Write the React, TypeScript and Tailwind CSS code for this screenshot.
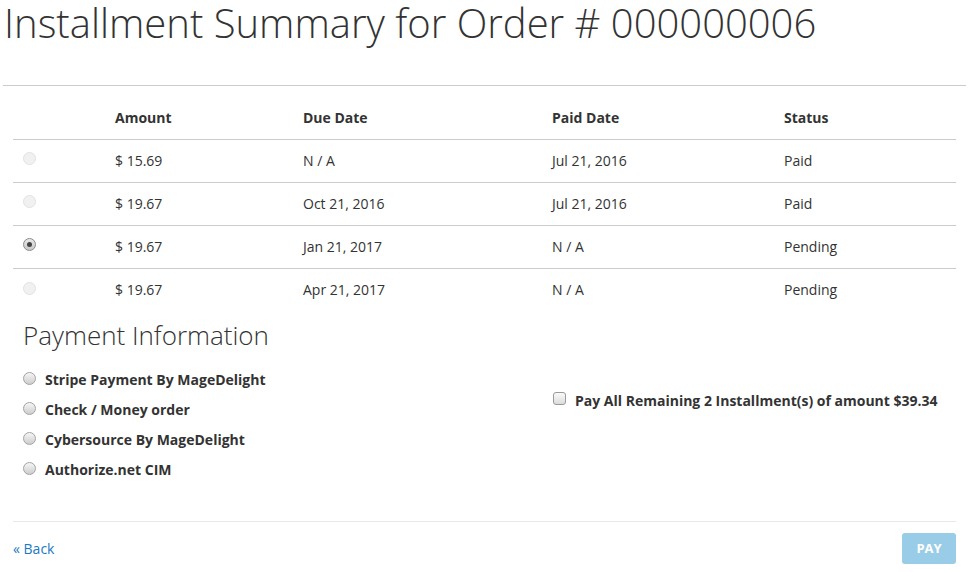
import React, { useState } from "react";

type Installment = {
  amount: string;
  dueDate: string;
  paidDate: string;
  status: string;
  disabled: boolean;
};

const installments: Installment[] = [
  { amount: "$ 15.69", dueDate: "N / A", paidDate: "Jul 21, 2016", status: "Paid", disabled: true },
  { amount: "$ 19.67", dueDate: "Oct 21, 2016", paidDate: "Jul 21, 2016", status: "Paid", disabled: true },
  { amount: "$ 19.67", dueDate: "Jan 21, 2017", paidDate: "N / A", status: "Pending", disabled: false },
  { amount: "$ 19.67", dueDate: "Apr 21, 2017", paidDate: "N / A", status: "Pending", disabled: true },
];

const methods = [
  "Stripe Payment By MageDelight",
  "Check / Money order",
  "Cybersource By MageDelight",
  "Authorize.net CIM",
];

const cols = "grid grid-cols-[92px_188px_249px_232px_182px]";

const RowRadio = ({ checked, disabled }: { checked: boolean; disabled: boolean }) => {
  if (disabled) {
    return <span className="block w-[13px] h-[13px] rounded-full border border-[#e2e2e2] bg-[#f1f1f1]" />;
  }
  return (
    <span className="flex items-center justify-center w-[13px] h-[13px] rounded-full border border-[#8a8a8a] bg-linear-to-b from-[#e8e8e8] to-[#c8c8c8]">
      {checked && <span className="block w-[5px] h-[5px] rounded-full bg-[#444]" />}
    </span>
  );
};

const MethodRadio = () => (
  <span className="block w-[13px] h-[13px] rounded-full border border-[#a3a3a3] bg-linear-to-b from-[#f6f6f6] to-[#cdcdcd]" />
);

const App = () => {
  const [selected] = useState(2);

  return (
    <div
      className="w-[973px] h-[572px] bg-white text-[#333333] overflow-hidden"
      style={{ fontFamily: '"Open Sans", "Liberation Sans", sans-serif' }}
    >
      <h1 className="pl-[4px] text-[40px] leading-[46px] font-light text-[#333333]">
        Installment Summary for Order # 000000006
      </h1>

      <div className="mt-[39px] ml-[3px] w-[963px] h-px bg-[#cccccc]" />

      <div className="ml-[13px] w-[943px] mt-[11px] text-[14px]">
        <div className={`${cols} h-[43px] items-center border-b border-[#cccccc] font-bold`}>
          <div />
          <div className="pl-[10px] -mt-px">Amount</div>
          <div className="pl-[10px] -mt-px">Due Date</div>
          <div className="pl-[10px] -mt-px">Paid Date</div>
          <div className="pl-[10px] -mt-px">Status</div>
        </div>
        {installments.map((row, i) => (
          <div
            key={i}
            className={`${cols} h-[43px] pb-[2px] items-center ${i < installments.length - 1 ? "border-b border-[#cccccc]" : ""}`}
          >
            <div className="pl-[10px] -mt-[3px]">
              <RowRadio checked={selected === i} disabled={row.disabled} />
            </div>
            <div className="pl-[10px]">{row.amount}</div>
            <div className="pl-[10px]">{row.dueDate}</div>
            <div className="pl-[10px]">{row.paidDate}</div>
            <div className="pl-[10px]">{row.status}</div>
          </div>
        ))}

        <h2 className="mt-[7px] pl-[10px] text-[26px] leading-[32px] font-light">Payment Information</h2>

        <div className="grid grid-cols-[530px_1fr] mt-[13px]">
          <div className="pl-[10px]">
            {methods.map((m) => (
              <label key={m} className="flex items-center gap-[9px] h-[30px] font-bold">
                <span className="-mt-[1px]">
                  <MethodRadio />
                </span>
                {m}
              </label>
            ))}
          </div>
          <div className="pl-[10px] mt-[21px]">
            <label className="flex items-center gap-[9px] h-[30px] font-bold">
              <span className="block -mt-[3px] w-[13px] h-[13px] rounded-[3px] border border-[#9a9a9a] bg-linear-to-b from-[#fafafa] to-[#dcdcdc]" />
              Pay All Remaining 2 Installment(s) of amount $39.34
            </label>
          </div>
        </div>

        <div className="mt-[37px] h-px bg-[#e8e8e8]" />

        <div className="flex items-center justify-between pt-[11px]">
          <a href="#" className="text-[#1979c3] text-[14px] leading-[20px]">
            « Back
          </a>
          <button
            type="button"
            disabled
            className="w-[54px] h-[31px] rounded-[3px] bg-[#99cce6] text-white text-[13px] font-bold"
          >
            PAY
          </button>
        </div>
      </div>
    </div>
  );
};

export default App;
